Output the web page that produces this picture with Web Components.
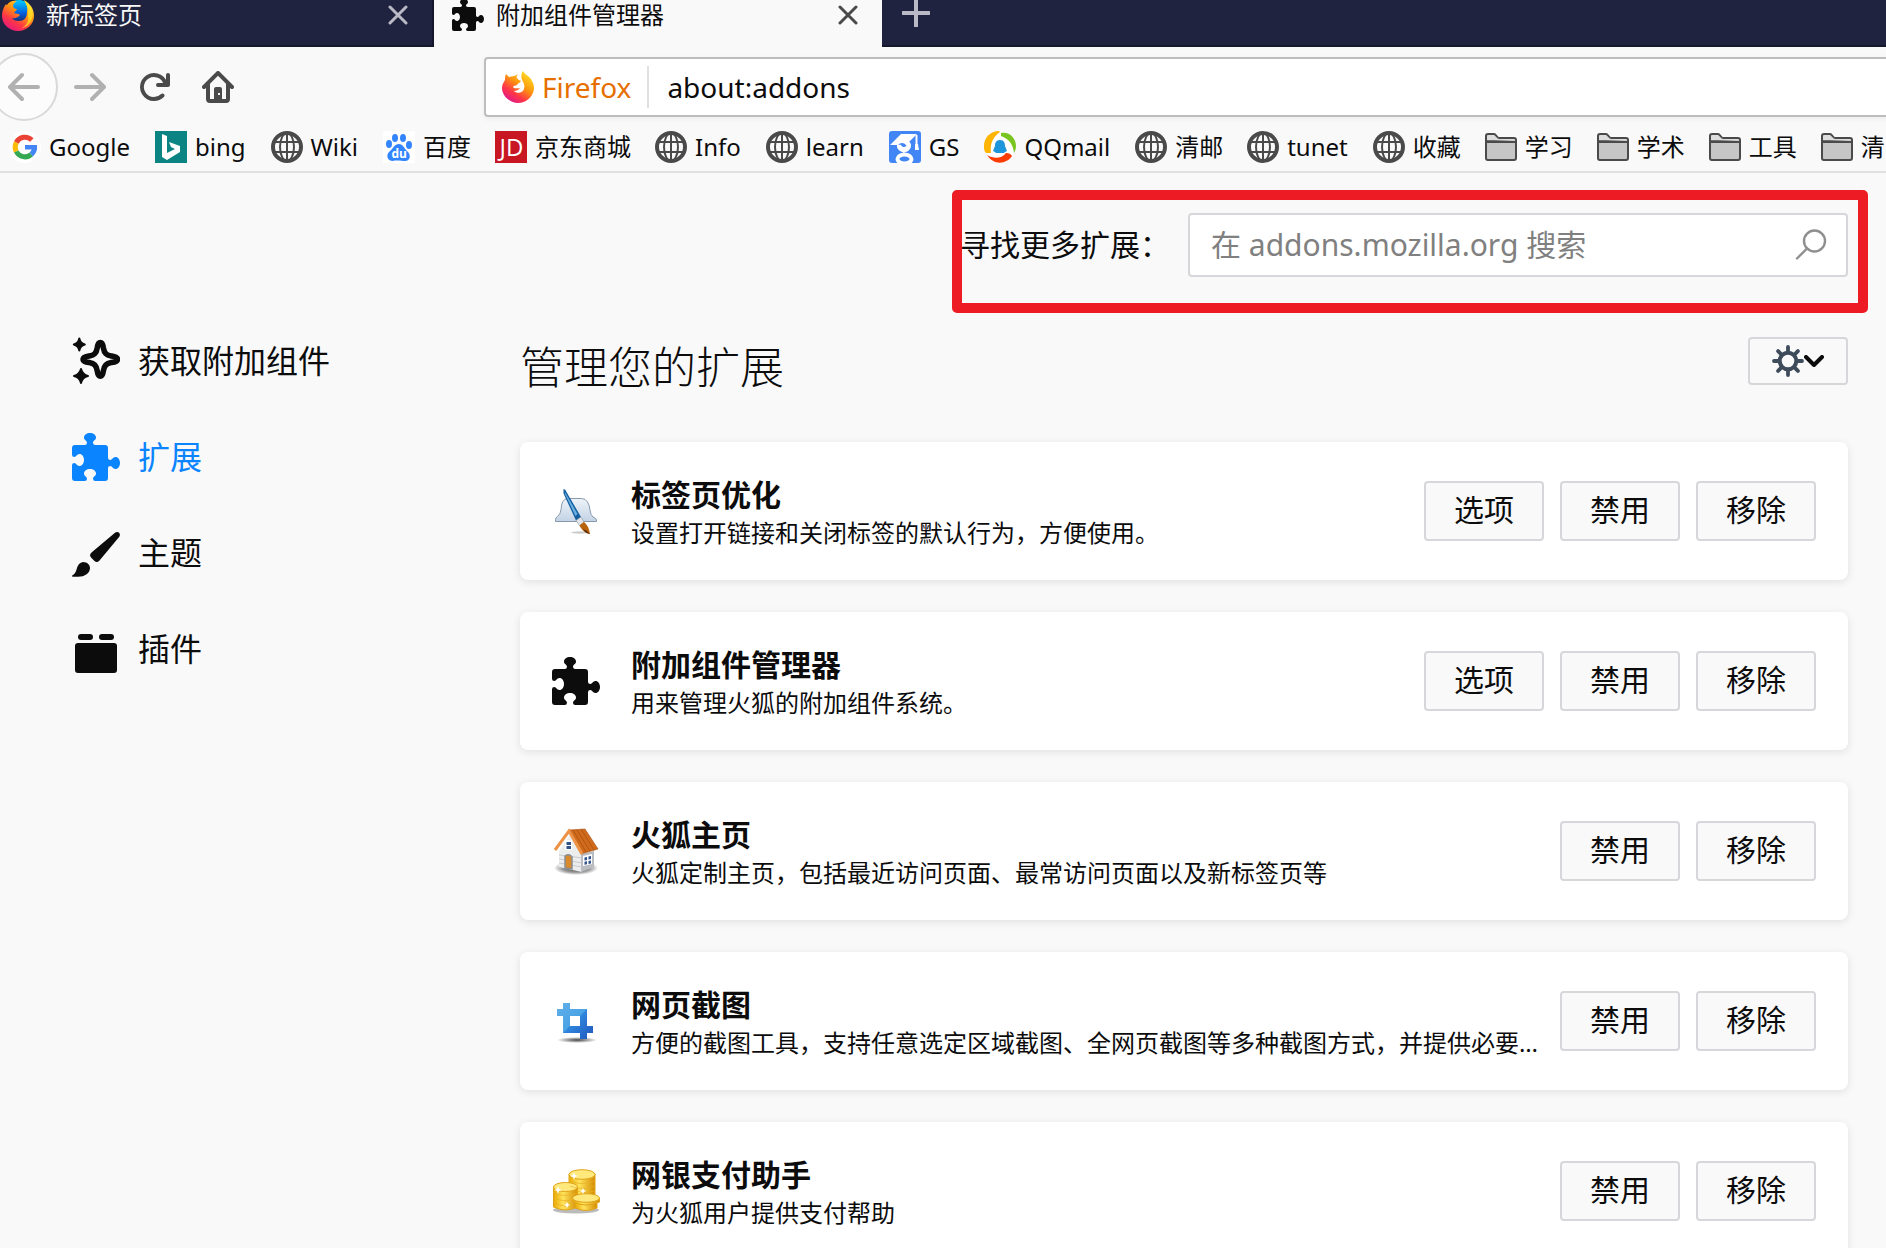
<!DOCTYPE html>
<html lang="zh-CN">
<head>
<meta charset="utf-8">
<title>附加组件管理器</title>
<style>
html, body { margin: 0; height: 100%; }
body {
  overflow: hidden;
  background: #f9f9fa;
  color: #0c0c0d;
  font-family: "Noto Sans", "Noto Sans CJK SC", sans-serif;
  font-size: 24px;
}
</style>
</head>
<body>
<browser-window></browser-window>

<script>
const PUZZLE = '<path fill="currentColor" d="M14.5 8c-.971 0-1 1-1.75 1a.765.765 0 0 1-.75-.75V5a1 1 0 0 0-1-1H7.75A.765.765 0 0 1 7 3.25c0-.75 1-.779 1-1.75C8 .635 7.1 0 6 0S4 .635 4 1.5c0 .971 1 1 1 1.75a.765.765 0 0 1-.75.75H1a1 1 0 0 0-1 1v2.25A.765.765 0 0 0 .75 8c.75 0 .779-1 1.75-1C3.365 7 4 7.9 4 9s-.635 2-1.500 2c-.971 0-1-1-1.750-1a.765.765 0 0 0-.75.75V15a1 1 0 0 0 1 1h3.25a.765.765 0 0 0 .75-.75c0-.75-1-.779-1-1.750 0-.865.9-1.500 2-1.500s2 .635 2 1.500c0 .971-1 1-1 1.750a.765.765 0 0 0 .75.75H11a1 1 0 0 0 1-1v-3.250a.765.765 0 0 1 .75-.75c.75 0 .779 1 1.750 1 .865 0 1.500-.9 1.500-2s-.635-2-1.500-2z"/>';

/* name: [viewBox, markup] */
const ICONS = {
  puzzle: ['0 0 16 16', PUZZLE],
  close: ['0 0 20 20', '<path d="M2 2L18 18M18 2L2 18" stroke="currentColor" stroke-width="3" stroke-linecap="round"/>'],
  plus: ['0 0 28 28', '<path d="M14 1V27M1 14H27" stroke="currentColor" stroke-width="4" stroke-linecap="round"/>'],
  back: ['0 0 16 16', '<path fill="currentColor" d="M15 7H3.414l4.293-4.293a1 1 0 0 0-1.414-1.414l-6 6a1 1 0 0 0 0 1.414l6 6a1 1 0 0 0 1.414-1.414L3.414 9H15a1 1 0 0 0 0-2z"/>'],
  forward: ['0 0 16 16', '<path fill="currentColor" d="M1 7h11.586L8.293 2.707a1 1 0 0 1 1.414-1.414l6 6a1 1 0 0 1 0 1.414l-6 6a1 1 0 0 1-1.414-1.414L12.586 9H1a1 1 0 0 1 0-2z"/>'],
  reload: ['0 0 16 16', '<path fill="currentColor" d="M15 1a1 1 0 0 0-1 1v2.418A6.995 6.995 0 1 0 8 15a6.954 6.954 0 0 0 4.95-2.05 1 1 0 0 0-1.414-1.414A5.019 5.019 0 1 1 12.549 6H10a1 1 0 0 0 0 2h5a1 1 0 0 0 1-1V2a1 1 0 0 0-1-1z"/>'],
  home: ['0 0 16 16', '<path fill="currentColor" fill-rule="evenodd" d="M15.707 7.293l-7-7a1 1 0 0 0-1.414 0l-7 7a1 1 0 0 0 1.414 1.414L2 8.414V14a2 2 0 0 0 2 2h8a2 2 0 0 0 2-2V8.414l.293.293a1 1 0 0 0 1.414-1.414zM12 14h-2V9a1 1 0 0 0-1-1H7a1 1 0 0 0-1 1v5H4V6.414l4-4 4 4zM8 11h1v1H8z"/>'],
  firefox: ['0 0 32 32', `<defs><linearGradient id="a" x1=".85" y1="0" x2=".2" y2="1"><stop offset="0" stop-color="#fff44f"/><stop offset=".4" stop-color="#ff980e"/><stop offset=".7" stop-color="#ff3647"/><stop offset="1" stop-color="#e31587"/></linearGradient><linearGradient id="b" x1="0" y1="0" x2="0" y2="1"><stop offset="0" stop-color="#00ccff"/><stop offset=".5" stop-color="#0060df"/><stop offset="1" stop-color="#20123a"/></linearGradient></defs>
    <circle cx="17" cy="14" r="13" fill="url(#b)"/>
    <path fill="url(#a)" d="M4 5C1 9 0 13 0 17c0 8 7 15 16 15s16-7 16-15C32 9 28 5 22 1c3 4 4 8 3 12 0 6-3 9-8 9-4 0-6-1-7-3 4 1 6-1 8-3-2-2-4-1-6-2 1-2 3-3 3-4-2 0-4-1-4-3 0-2 2-4 4-5-5-1-8 1-10 4C4 6 4 5 4 5z"/>
    <path fill="#ffe226" d="M22 1c8 5 10 12 8 18-1 5-5 9-10 10 5-3 7-7 6-12 1-6-1-10-4-16z" opacity=".75"/>`],
  flame: ['0 0 32 32', `<defs><linearGradient id="a" x1=".85" y1=".05" x2=".2" y2="1"><stop offset="0" stop-color="#ffe226"/><stop offset=".4" stop-color="#ff980e"/><stop offset=".7" stop-color="#ff3647"/><stop offset="1" stop-color="#d9139a"/></linearGradient></defs>
    <path fill="url(#a)" d="M4 3c1 1 2 2 3 3l5-1c1 0 2-1 4-2-1 2-2 3-1 4 1 2 3 2 4 3-1 2-3 2-4 4-1 1-3 0-4 2 1 2 4 1 7 1-1 2-4 3-6 3 3 3 9 2 10-2 1-3 0-6-2-9-1-3-1-6 1-9 3 5 7 5 9 10 2 3 2 6 2 8-1 8-8 14-16 14S0 25 0 17c0-4 2-6 3-8 0-2 0-4 1-6z"/>`],
  google: ['0 0 32 32', `<circle cx="16" cy="16" r="16" fill="#fff"/><g fill="none" stroke-width="5"><path stroke="#ea4335" d="M7.3 11.5A9.7 9.7 0 0 1 22.8 9"/><path stroke="#fbbc05" d="M7.3 20.5a9.7 9.7 0 0 1 0-9"/><path stroke="#34a853" d="M7.3 20.5a9.7 9.7 0 0 0 15 3"/><path stroke="#4285f4" d="M22.3 23.5a9.5 9.5 0 0 0 3.3-7"/></g><path fill="#4285f4" d="M16 14h12v4.500H16z"/>`],
  bing: ['0 0 32 32', '<path fill="#0c8484" d="M0 0h32v32H0z"/><path fill="#fff" d="M7 3l5 2v17l8-4-4-2-2-5 11 4v6l-13 8-5-3z"/>'],
  globe: ['0 0 32 32', '<g fill="none" stroke="#4a4a4b"><circle cx="16" cy="16" r="14" stroke-width="4"/><ellipse cx="16" cy="16" rx="7" ry="14" stroke-width="2"/><path stroke-width="2" d="M3 11H29M3 21H29M16 2V30"/></g>'],
  baidu: ['0 0 32 32', '<path fill="#fff" d="M0 0h32v32H0z"/><g fill="#3385ff"><ellipse cx="6" cy="13" rx="3" ry="4"/><ellipse cx="12" cy="7" rx="3" ry="4"/><ellipse cx="20" cy="7" rx="3" ry="4"/><ellipse cx="26" cy="14" rx="3" ry="4"/><path d="M16 13c4 0 5 4 8 7 4 3 4 10-2 10-3 0-9-1-12 0-6 0-7-6-4-9 5-4 5-8 10-8z"/></g><text x="8.500" y="27" font-family="Open Sans, sans-serif" font-size="12" font-weight="700" fill="#fff">du</text>'],
  jd: ['0 0 32 32', '<path fill="#c81623" d="M0 0h32v32H0z"/><text x="4.500" y="25" font-family="Open Sans, sans-serif" font-size="24" fill="#fff">JD</text>'],
  scholar: ['0 0 32 32', '<rect width="32" height="32" rx="3" fill="#4285f4"/><path fill="#fff" d="M1 14L12 3h16l-8 8v3h-3a5 5 0 0 0-8 0z"/><path stroke="#fff" stroke-width="2" d="M27.500 4V14"/><path fill="#fff" d="M26 13h3l1 6h-4z"/><g fill="none" stroke="#fff" stroke-width="4"><path d="M19 12a5 4.500 0 1 1-9 2 5 4.500 0 0 0 8 3"/><path d="M19 13c3 5-5 5-3 8"/><ellipse cx="15.500" cy="28" rx="7" ry="4.500"/></g>'],
  qqmail: ['0 0 32 32', '<circle cx="16" cy="16" r="15" fill="#fff"/><path fill="#ffb400" d="M15 0C6 0 0 7 0 15c0 3 0 5 2 7h5c-1-9 1-15 9-21z"/><path fill="#7ac51f" d="M17 2c8-2 15 5 15 13 0 3-1 5-2 7-1-9-5-14-13-17z"/><path fill="#fb3c05" d="M3 24c7 4 14 4 19-2 3 0 5 1 6 3-5 8-18 10-25-1z"/><path fill="#1e96dc" d="M16 9c4 0 5 3 5 6l2 5-2 1-1 1h-8l-1-1-2-1 2-5c0-3 1-6 5-6z"/>'],
  folder: ['0 0 32 32', '<path fill="#dcdcdd" stroke="#4a4a4b" stroke-width="2" stroke-linejoin="round" d="M1 10V5a2 2 0 0 1 2-2h6c2 0 3 4 5 4h15a2 2 0 0 1 2 2v2z"/><path fill="#c6c6c7" stroke="#4a4a4b" stroke-width="2" stroke-linejoin="round" d="M1 11h30v16a2 2 0 0 1-2 2H3a2 2 0 0 1-2-2z"/>'],
  search: ['0 0 32 32', '<circle cx="19.500" cy="12" r="10.500" fill="none" stroke="#8f8f90" stroke-width="2.400"/><path d="M12 19.500L2 29.500" stroke="#8f8f90" stroke-width="2.400" stroke-linecap="round"/>'],
  gear: ['0 0 32 32', '<g stroke="#3e4b5a" fill="none"><circle cx="16" cy="16" r="8.300" stroke-width="4"/><path stroke-width="3.800" stroke-linecap="round" d="M16 2v5M16 25v5M2 16h5M25 16h5M6.100 6.100l3.200 3.200M22.700 22.700l3.200 3.200M25.900 6.100l-3.200 3.200M9.300 22.700l-3.200 3.200"/></g>'],
  chevron: ['0 0 20 12', '<path d="M2 2l8 8 8-8" fill="none" stroke="#0c0c0d" stroke-width="4" stroke-linecap="round" stroke-linejoin="round"/>'],
  sparkle: ['0 0 48 48', '<path fill="none" stroke="currentColor" stroke-width="5.600" stroke-linejoin="round" d="M28.300 5.500c2 0 2.500 1.500 3 5 1 6 3 7.500 8 8.500 4 .8 6.200 1.200 6.200 3.300s-2.200 2.500-6.200 3.300c-5 1-7 2.500-8 8.500-.5 3.500-1 5-3 5s-2.500-1.500-3-5c-1-6-3-7.500-8-8.500-4-.8-6.200-1.200-6.200-3.300s2.200-2.500 6.200-3.300c5-1 7-2.500 8-8.500.5-3.500 1-5 3-5z"/><path fill="currentColor" stroke="currentColor" stroke-linejoin="round" d="M7.300 1.500q1 5 5.500 6q-4.500 1-5.500 6q-1-5-5.500-6q4.500-1 5.500-6zM9 32q1.500 5.500 7 7q-5.500 1-7 7q-1.500-6-7-7q5.500-1.500 7-7z" stroke-width="2"/>'],
  brush: ['0 0 48 48', '<path fill="currentColor" d="M43 3.800c3-2.400 6.300.6 4.300 4L27.500 31.500c-1.500 1.800-3.500 2-5 .5l-3-3c-2-2-2-3.500 0-5.500zM11 33c4.500 0 7 3 7 6 0 5-5 8.800-12 8.800-3 0-6 .4-6-.8 0-1 1.500-1 3-3 2.400-3 1.500-10 8-11z"/>'],
  plugin: ['0 0 48 48', '<g fill="currentColor"><rect x="3" y="18" width="42" height="30" rx="3"/><rect x="6" y="9" width="15" height="6" rx="3"/><rect x="27" y="9" width="15" height="6" rx="3"/></g>'],
  tabmix: ['0 0 48 48', `<defs><linearGradient id="a" x1="0" y1="0" x2="0" y2="1"><stop offset="0" stop-color="#eef3f9"/><stop offset="1" stop-color="#c3d3e5"/></linearGradient></defs>
    <ellipse cx="28" cy="45.500" rx="9" ry="1.200" fill="#ccc"/><path fill="url(#a)" stroke="#8899ab" d="M10.500 15q2-3.500 5-3.500h14q4 0 6 3.500 2 3 2.500 8t3 7q3.500 1.500 3.500 3v1.500h-41v-2q0-2 2-3 3-2 3.500-7t1.500-7.500z"/><path fill="#14609f" d="M11.500 2q2 0 3 3L29 30l-5 3.500-12.500-27z"/><path fill="#6aaee2" d="M13.500 6l12 21-2 2L12.500 6z"/><path fill="#e2e6ea" stroke="#8a9097" stroke-width=".6" d="M24 33.500l5-3.500 3 5-4.500 3.500z"/><path fill="#b8640f" d="M27.500 38.500l4.500-3.500q5 4 6 12-8-2-10.500-8.500z"/><path fill="#5e2d05" d="M31 42q4 1 7 5-5-.5-7-5z"/>`],
  house: ['0 0 48 48', `<defs><radialGradient id="s"><stop offset="0" stop-color="#444"/><stop offset=".6" stop-color="#666" stop-opacity=".7"/><stop offset="1" stop-color="#555" stop-opacity="0"/></radialGradient></defs>
    <ellipse cx="24" cy="41" rx="22" ry="7" fill="url(#s)"/><path fill="#eceded" d="M7 24L18 8l12 19v18L7 40z"/><path fill="#b9bcc1" d="M29 27l13-3v16l-13 5z"/><path stroke="#c8cbd0" d="M7 28l23 3M7 32l23 4M7 36l23 4"/><path fill="#d06a1c" stroke="#a44d0e" stroke-width=".6" d="M17 3l16-1 13 20-17 5z"/><path stroke="#a9510f" stroke-width=".8" d="M21 3l13 22M25 3l13 21M29 2l13 21"/><path fill="none" stroke="#ec9348" stroke-width="3" d="M3 23L17 4l13 23"/><path fill="#fff" d="M13 13h7v10h-7z"/><path fill="#31538a" d="M14.500 15h4.500v3h-4.500zM14.500 19h4.500v3h-4.500z"/><path fill="#d98b2b" stroke="#8a8d92" stroke-width="1.500" d="M13 41V29q4-3 7 1v12z"/><path fill="#fff" d="M31 29l9-2v10l-9 2z"/><path fill="#31538a" d="M32.500 30.500l2.500-.5v3l-2.500.5zM36.500 29.600l2.500-.6v3l-2.500.6zM32.500 34.800l2.500-.5v3l-2.500.5zM36.500 34l2.500-.6v3l-2.500.6z"/>`],
  crop: ['0 0 48 48', `<defs><linearGradient id="a" x1="0" y1="0" x2="1" y2="1"><stop offset="0" stop-color="#62b0e8"/><stop offset=".49" stop-color="#4aa3e5"/><stop offset=".51" stop-color="#2f86dd"/><stop offset="1" stop-color="#2054bd"/></linearGradient><radialGradient id="s"><stop offset="0" stop-color="#444"/><stop offset="1" stop-color="#444" stop-opacity="0"/></radialGradient></defs>
    <ellipse cx="25" cy="43" rx="20" ry="3" fill="url(#s)"/><path fill="url(#a)" fill-rule="evenodd" d="M11 6h7v6h17v17h6v7h-6v6h-7v-6H11V19H5v-7h6zM18 19v10h10V19z"/>`],
  coins: ['0 0 48 48', `<defs><linearGradient id="a"><stop offset="0" stop-color="#e9a800"/><stop offset=".4" stop-color="#ffe45c"/><stop offset="1" stop-color="#d48c00"/></linearGradient></defs>
    <ellipse cx="24" cy="43" rx="23" ry="3.500" fill="#bbb"/><g fill="url(#a)" stroke="#e0a41a"><path d="M17 7v28h26V7z"/><ellipse cx="30" cy="7.500" rx="13" ry="4.800" fill="#ffe87c"/><path d="M1.500 20v20q12 6 24 0V20z"/><ellipse cx="13.500" cy="20" rx="12" ry="4.500" fill="#ffe87c"/><path d="M23 36v5q12 5 22 0v-5z"/><path d="M21 31v4q13 6 26.500 0v-4z"/><ellipse cx="34" cy="31" rx="13.500" ry="4.300" fill="#ffe87c"/></g><path fill="none" stroke="#e8b02a" stroke-width=".7" d="M17 14q13 5 26 0M18 19q12 5 25 0M24 24q10 3 19 0M2 26q12 5 23 0M2 31q12 5 20 1M2 36q12 5 20 2"/><path fill="#fff" d="M22 5l1 3 3 1-3 1-1 3-1-3-3-1 3-1zM6 19l1 3 3 1-3 1-1 3-1-3-3-1 3-1zM15 35l1 2 2 1-2 1-1 2-1-2-2-1 2-1zM31 21l1 2 2 1-2 1-1 2-1-2-2-1 2-1z"/>`]
};

class ShadowElement extends HTMLElement {
  connectedCallback() {
    if (this.shadowRoot) return;
    this.attachShadow({ mode: 'open' }).innerHTML =
      '<style>*{box-sizing:border-box}button,input{font-family:inherit;margin:0}' + this.css() + '</style>' + this.html();
  }
  attr(name) { return this.getAttribute(name) || ''; }
}

class UiIcon extends ShadowElement {
  css() { return ':host{display:block;flex:none;width:32px;height:32px}svg{display:block;width:100%;height:100%}'; }
  html() {
    const [box, body] = ICONS[this.attr('name')];
    return `<svg viewBox="${box}" aria-hidden="true">${body}</svg>`;
  }
}

class BrowserTab extends ShadowElement {
  css() {
    return `
    :host{display:flex;flex:none;align-items:center;gap:12px;width:434px;height:64px;padding:0 26px 0 2px;color:#f9f9fa;
      box-shadow:inset -2px -2px #15172c;line-height:28px}
    :host([active]){width:448px;padding:0 24px 0 18px;background:#f9f9f9;color:#0c0c0d;box-shadow:none}
    span{flex:1;white-space:nowrap}
    button{padding:0;border:0;background:none;color:#b9bac6}
    :host([active]) button{color:#4a4a4b}
    .x{width:20px;height:20px}`;
  }
  html() {
    return `<ui-icon name="${this.attr('icon')}"></ui-icon><span><slot></slot></span>
      <button aria-label="关闭标签页"><ui-icon class="x" name="close"></ui-icon></button>`;
  }
}

class TabStrip extends ShadowElement {
  css() {
    return `
    :host{display:flex;align-items:flex-end;height:47px;overflow:hidden;background:#202340;box-shadow:inset 0 -2px #15172c}
    button{height:64px;padding:0 20px 4px;border:0;background:none;color:#b9bac6}
    ui-icon{width:28px;height:28px}`;
  }
  html() {
    return `<browser-tab icon="firefox">新标签页</browser-tab><browser-tab icon="puzzle" active>附加组件管理器</browser-tab>
      <button aria-label="打开新标签页"><ui-icon name="plus"></ui-icon></button>`;
  }
}

class NavBar extends ShadowElement {
  css() {
    return `
    :host{display:flex;align-items:center;padding:6px 0 2px;background:#f9f9f9;overflow:hidden}
    button{display:flex;align-items:center;justify-content:center;flex:none;width:64px;height:68px;padding:0;border:0;background:none;color:#4a4a4b}
    button:disabled{color:#b1b1b1}
    .back{width:68px;margin-left:-10px;border:2px solid #d9d9da;border-radius:50%;background:#fcfcfc}
    form{display:flex;align-items:center;flex:1;height:60px;margin:0 -8px 0 234px;border:2px solid #bdbdbd;border-radius:4px;background:#fff;
      box-shadow:0 2px 6px rgba(0,0,0,.05);font-size:28px}
    form .identity{width:auto;height:42px;gap:8px;padding:0 16px;border-right:2px solid #e0e0e1;color:#e66f00;font-size:28px}
    input{flex:1;min-width:0;padding:0 18px;border:0;background:none;outline:0;color:#0c0c0d;font-size:28px}`;
  }
  html() {
    return `<button class="back" disabled aria-label="后退"><ui-icon name="back"></ui-icon></button>
      <button disabled aria-label="前进"><ui-icon name="forward"></ui-icon></button>
      <button aria-label="刷新"><ui-icon name="reload"></ui-icon></button>
      <button aria-label="主页"><ui-icon name="home"></ui-icon></button>
      <form><button type="button" class="identity"><ui-icon name="flame"></ui-icon>Firefox</button>
      <input aria-label="地址栏" value="about:addons"></form>`;
  }
}

class BookmarkItem extends ShadowElement {
  css() {
    return `:host{display:block;flex:none}
    a{display:flex;align-items:center;gap:8px;color:#0c0c0d;text-decoration:none;white-space:nowrap;line-height:32px}
    :host([lang=en]) a{padding-right:1px}`;
  }
  html() { return `<a href="#"><ui-icon name="${this.attr('icon')}"></ui-icon><slot></slot></a>`; }
}

class BookmarkBar extends ShadowElement {
  css() {
    return ':host{display:flex;align-items:center;gap:24px;height:50px;padding-left:9px;overflow:hidden;background:#f9f9f9;border-bottom:2px solid #e0e0e1}';
  }
  html() {
    return [['google', 'Google'], ['bing', 'bing'], ['globe', 'Wiki'], ['baidu', '百度'], ['jd', '京东商城'], ['globe', 'Info'],
      ['globe', 'learn'], ['scholar', 'GS'], ['qqmail', 'QQmail'], ['globe', '清邮'], ['globe', 'tunet'], ['globe', '收藏'],
      ['folder', '学习'], ['folder', '学术'], ['folder', '工具'], ['folder', '清']]
      .map(([i, t]) => `<bookmark-item icon="${i}" lang="${/^\w+$/.test(t) ? 'en' : 'zh-CN'}">${t}</bookmark-item>`).join('');
  }
}

class SideLink extends ShadowElement {
  css() {
    return `:host{display:block}
    a{display:flex;align-items:center;gap:18px;height:96px;color:#0c0c0d;text-decoration:none;font-size:32px;line-height:48px}
    :host([selected]) a{color:#0a84ff}
    ui-icon{width:48px;height:48px}`;
  }
  html() { return `<a href="#"><ui-icon name="${this.attr('icon')}"></ui-icon><slot></slot></a>`; }
}

class AddonSearch extends ShadowElement {
  css() {
    return `
    :host{display:flex;position:relative;align-items:center;justify-content:flex-end;font-size:30px}
    label{margin-right:18px;white-space:nowrap;line-height:48px}
    .field{display:flex;align-items:center;width:660px;height:64px;padding:0 19px 0 21px;border:2px solid #d7d7db;border-radius:4px;background:#fff}
    input{flex:1;min-width:0;padding:0;border:0;outline:0;background:none;font-size:30px;line-height:48px}
    input::placeholder{color:#808080;opacity:1}
    .mark{position:absolute;top:-23px;right:-20px;bottom:-36px;width:916px;border:10px solid #ed1c24;border-radius:5px;pointer-events:none}`;
  }
  html() {
    return `<label for="q">寻找更多扩展：</label>
      <div class="field"><input id="q" placeholder="在 addons.mozilla.org 搜索"><ui-icon name="search"></ui-icon></div>
      <div class="mark"></div>`;
  }
}

class AddonCard extends ShadowElement {
  css() {
    return `
    :host{display:flex;align-items:center;height:138px;padding:0 32px;border-radius:8px;background:#fff;box-shadow:0 2px 8px rgba(12,12,13,.1)}
    ui-icon{width:48px;height:48px;margin-right:31px}
    .text{flex:1;min-width:0}
    h3,p{margin:0;white-space:nowrap;overflow:hidden;text-overflow:ellipsis}
    h3{font-size:30px;line-height:44px;font-weight:700}
    p{font-size:24px;line-height:32px}
    .actions{display:flex;gap:16px;margin-left:16px}
    button{width:120px;height:60px;padding:0 0 2px;border:2px solid #d7d7db;border-radius:4px;background:#f9f9fa;color:#0c0c0d;font-size:30px;line-height:48px}`;
  }
  html() {
    const actions = this.hasAttribute('options') ? ['选项', '禁用', '移除'] : ['禁用', '移除'];
    return `<ui-icon name="${this.attr('icon')}"></ui-icon>
      <div class="text"><h3>${this.attr('name')}</h3><p><slot></slot></p></div>
      <div class="actions">${actions.map(a => `<button>${a}</button>`).join('')}</div>`;
  }
}

class AddonManager extends ShadowElement {
  css() {
    return `
    :host{display:flex;flex:1;min-height:0;overflow:hidden}
    nav{flex:none;width:520px;padding:140px 0 0 72px}
    main{flex:1;min-width:0;padding:40px 38px 0 0}
    header{display:flex;align-items:flex-start;justify-content:space-between;margin:60px 0 45px}
    h1{margin:0;font-size:44px;line-height:60px;font-weight:300}
    .tools{display:flex;align-items:center;justify-content:center;width:100px;height:48px;padding:0;border:2px solid #d7d7db;border-radius:4px;background:#f9f9fa}
    .chev{width:20px;height:12px}
    section{display:flex;flex-direction:column;gap:32px}`;
  }
  html() {
    return `<nav>
        <side-link icon="sparkle">获取附加组件</side-link>
        <side-link icon="puzzle" selected>扩展</side-link>
        <side-link icon="brush">主题</side-link>
        <side-link icon="plugin">插件</side-link>
      </nav>
      <main>
        <addon-search></addon-search>
        <header><h1>管理您的扩展</h1><button class="tools" aria-label="工具"><ui-icon name="gear"></ui-icon><ui-icon class="chev" name="chevron"></ui-icon></button></header>
        <section>
          <addon-card icon="tabmix" name="标签页优化" options>设置打开链接和关闭标签的默认行为，方便使用。</addon-card>
          <addon-card icon="puzzle" name="附加组件管理器" options>用来管理火狐的附加组件系统。</addon-card>
          <addon-card icon="house" name="火狐主页">火狐定制主页，包括最近访问页面、最常访问页面以及新标签页等</addon-card>
          <addon-card icon="crop" name="网页截图">方便的截图工具，支持任意选定区域截图、全网页截图等多种截图方式，并提供必要…</addon-card>
          <addon-card icon="coins" name="网银支付助手">为火狐用户提供支付帮助</addon-card>
        </section>
      </main>`;
  }
}

class BrowserWindow extends ShadowElement {
  css() { return ':host{display:flex;flex-direction:column;height:100vh;overflow:hidden}tab-strip,nav-bar,bookmark-bar{flex:none}'; }
  html() { return '<tab-strip></tab-strip><nav-bar></nav-bar><bookmark-bar></bookmark-bar><addon-manager></addon-manager>'; }
}

customElements.define('ui-icon', UiIcon);
customElements.define('browser-tab', BrowserTab);
customElements.define('tab-strip', TabStrip);
customElements.define('nav-bar', NavBar);
customElements.define('bookmark-item', BookmarkItem);
customElements.define('bookmark-bar', BookmarkBar);
customElements.define('side-link', SideLink);
customElements.define('addon-search', AddonSearch);
customElements.define('addon-card', AddonCard);
customElements.define('addon-manager', AddonManager);
customElements.define('browser-window', BrowserWindow);
</script>
</body>
</html>
